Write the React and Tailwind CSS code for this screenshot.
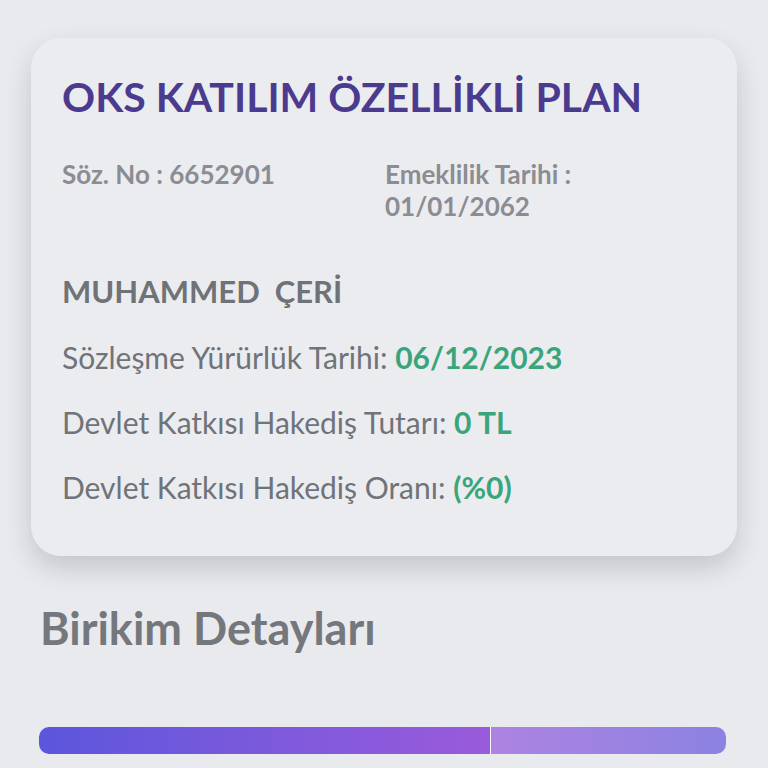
import React from 'react';

const font = { fontFamily: 'Lato, "Noto Sans", sans-serif' };

const Row = ({ label, value }) => (
  <p className="text-[30px] leading-[36px] text-[#707378]">
    {label} <span className="font-bold text-[#3aa57a]">{value}</span>
  </p>
);

export default function App() {
  return (
    <div className="min-h-[768px] w-[768px] overflow-hidden bg-[#e9eaee]" style={font}>
      <div className="mx-[31px] mt-[38px] h-[518px] rounded-[30px] bg-[#ebecf0] px-[31px] pt-[35px] shadow-[0_12px_28px_rgba(0,0,0,0.16)]">
        <h1 className="text-[41px] font-bold leading-[48px] text-[#4b3b8f]">OKS KATILIM ÖZELLİKLİ PLAN</h1>

        <div className="mt-[37px] grid grid-cols-[323px_1fr] text-[26px] font-bold leading-[32px] text-[#8b8d92]">
          <p>Söz. No : 6652901</p>
          <p>
            Emeklilik Tarihi :<br />
            01/01/2062
          </p>
        </div>

        <h2 className="mt-[50px] whitespace-pre text-[31px] font-bold leading-[38px] text-[#6f7276]">MUHAMMED  ÇERİ</h2>

        <div className="mt-[29px] flex flex-col gap-[29px]">
          <Row label="Sözleşme Yürürlük Tarihi:" value="06/12/2023" />
          <Row label="Devlet Katkısı Hakediş Tutarı:" value="0 TL" />
          <Row label="Devlet Katkısı Hakediş Oranı:" value="(%0)" />
        </div>
      </div>

      <h2 className="ml-[40px] mt-[46px] text-[45px] font-bold leading-[52px] text-[#74777b]">Birikim Detayları</h2>

      <div className="ml-[39px] mr-[42px] mt-[73px] flex h-[27px] overflow-hidden rounded-[10px]">
        <div className="w-[451px] bg-gradient-to-r from-[#5b56dc] to-[#9a5adb]" />
        <div className="w-px bg-white" />
        <div className="flex-1 bg-gradient-to-r from-[#ad83e1] to-[#8b82e1]" />
      </div>
    </div>
  );
}
